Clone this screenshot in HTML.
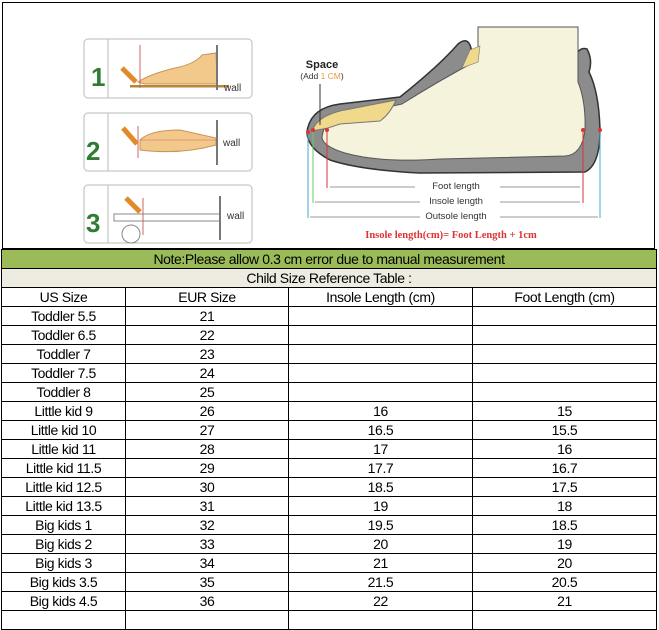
<!DOCTYPE html>
<html><head><meta charset="utf-8"><style>
body{margin:0;width:659px;height:614px;background:#fff;position:relative;overflow:hidden;font-family:"Liberation Sans",sans-serif;}
.img{position:absolute;left:2px;top:2px;width:653px;height:247px;border:1px solid #000;box-sizing:border-box}
svg{position:absolute;left:0;top:0}
table{position:absolute;left:1px;top:249px;border-collapse:collapse;table-layout:fixed;width:655px}
td{border:1px solid #000;height:18px;padding:0;text-align:center;font-size:14px;letter-spacing:-0.4px;line-height:18px;white-space:nowrap;overflow:hidden}
.g{background:#9bbb59}
.b{background:#eeece1}
</style></head><body>
<div class="img"></div>
<svg width="659" height="249" viewBox="0 0 659 249" xmlns="http://www.w3.org/2000/svg" font-family="Liberation Sans, sans-serif">
<g fill="none" stroke="#bbb" stroke-width="1">
<rect x="84" y="39" width="168" height="59" rx="4"/>
<rect x="84" y="113" width="168" height="58" rx="4"/>
<rect x="84" y="185" width="168" height="58" rx="4"/>
<line x1="108" y1="39" x2="108" y2="98"/><line x1="108" y1="113" x2="108" y2="171"/><line x1="108" y1="185" x2="108" y2="243"/>
</g>
<text x="91" y="86" font-size="26" font-weight="bold" fill="#2e7d32">1</text>
<text x="86" y="160" font-size="26" font-weight="bold" fill="#2e7d32">2</text>
<text x="86" y="232" font-size="26" font-weight="bold" fill="#2e7d32">3</text>
<path d="M138 82 Q150 74 175 68 Q195 64 202 55 L216 53 L217 84 L145 84 Z" fill="#f3c98b" stroke="#c9935a"/>
<rect x="130" y="85" width="99" height="2.5" fill="#b8863b"/>
<line x1="140" y1="45" x2="140" y2="88" stroke="#c66" stroke-width="1"/>
<path d="M140 140 Q150 130 180 130 L216 138 L216 145 Q180 155 140 150 Z" fill="#f3c98b" stroke="#c9935a"/>
<line x1="138" y1="126" x2="138" y2="158" stroke="#c66"/>
<line x1="140" y1="140" x2="216" y2="140" stroke="#c66" stroke-width="0.6"/>
<rect x="114" y="214" width="106" height="7" fill="#fff" stroke="#888"/>
<line x1="143" y1="198" x2="143" y2="235" stroke="#c66"/>
<line x1="217" y1="45" x2="217" y2="90" stroke="#777" stroke-width="2"/>
<line x1="217" y1="120" x2="217" y2="165" stroke="#777" stroke-width="2"/>
<line x1="220" y1="196" x2="220" y2="240" stroke="#777" stroke-width="2"/>
<text x="224" y="91" font-size="10" fill="#333">wall</text>
<text x="223" y="146" font-size="10" fill="#333">wall</text>
<text x="227" y="219" font-size="10" fill="#333">wall</text>
<path d="M122 68 L136 82" stroke="#e08a2a" stroke-width="5"/>
<path d="M123 128 L137 144" stroke="#e08a2a" stroke-width="5"/>
<path d="M126 198 L140 212" stroke="#e08a2a" stroke-width="5"/>
<circle cx="131" cy="234" r="9" fill="#fff" stroke="#888"/>
<path d="M307 132 Q310 108 340 104 L400 97 Q440 65 458 44 Q468 36 471 48 L472 60 L575 60 Q578 46 587 49 Q593 60 589 72 Q599 92 600 130 Q600 165 585 172 L420 173 Q360 170 330 160 Q307 148 307 132 Z" fill="#8c8c8c" stroke="#333" stroke-width="1.5"/>
<path d="M322 137 Q325 117 345 113 Q380 109 402 104 Q440 80 478 60 L478 27 L578 27 L578 82 Q586 102 585 130 Q582 155 565 156 L440 159 Q380 163 345 153 Q322 146 322 137 Z" fill="#f6f3dc" stroke="#555"/>
<path d="M312 131 Q318 114 350 109 L396 100 Q390 114 380 121 L340 124 L328 128 Z" fill="#f0d98a" stroke="#777"/>
<path d="M470 50 L480 46 L478 62 L462 68 Z" fill="#f0d98a" stroke="#777" stroke-width="0.6"/>
<line x1="308" y1="132" x2="308" y2="218" stroke="#4aa8c8"/>
<line x1="313" y1="130" x2="313" y2="203" stroke="#6c6"/>
<line x1="327" y1="130" x2="327" y2="188" stroke="#d33"/>
<line x1="583" y1="130" x2="583" y2="203" stroke="#d33"/>
<line x1="600" y1="130" x2="600" y2="218" stroke="#4aa8c8"/>
<g fill="#d33"><circle cx="308" cy="132" r="2"/><circle cx="313" cy="130" r="2"/><circle cx="327" cy="130" r="2"/><circle cx="583" cy="130" r="2"/><circle cx="600" cy="130" r="2"/></g>
<g stroke="#999" stroke-width="1"><line x1="330" y1="187" x2="415" y2="187"/><line x1="500" y1="187" x2="580" y2="187"/><line x1="315" y1="202" x2="420" y2="202"/><line x1="500" y1="202" x2="580" y2="202"/><line x1="310" y1="217" x2="420" y2="217"/><line x1="500" y1="217" x2="598" y2="217"/></g>
<text x="456" y="189" font-size="9.5" text-anchor="middle" fill="#333">Foot length</text>
<text x="456" y="204" font-size="9.5" text-anchor="middle" fill="#333">Insole length</text>
<text x="456" y="219" font-size="9.5" text-anchor="middle" fill="#333">Outsole length</text>
<text x="322" y="68" font-size="11" font-weight="bold" text-anchor="middle" fill="#222">Space</text>
<text x="322" y="79" font-size="8.5" text-anchor="middle" fill="#333">(Add <tspan fill="#e89a3c">1 CM</tspan>)</text>
<line x1="320" y1="84" x2="320" y2="125" stroke="#333"/>
<text x="451" y="238" font-size="10.5" font-weight="bold" font-family="Liberation Serif, serif" text-anchor="middle" fill="#d33">Insole length(cm)= Foot Length + 1cm</text>
</svg>
<table>
<colgroup><col style="width:124px"><col style="width:163px"><col style="width:184px"><col style="width:184px"></colgroup>
<tr><td colspan="4" class="g">Note:Please allow 0.3 cm error due to manual measurement</td></tr>
<tr><td colspan="4" class="b">Child Size Reference Table :</td></tr>
<tr><td>US Size</td><td>EUR Size</td><td>Insole Length (cm)</td><td>Foot Length (cm)</td></tr>
<tr><td>Toddler 5.5</td><td>21</td><td></td><td></td></tr>
<tr><td>Toddler 6.5</td><td>22</td><td></td><td></td></tr>
<tr><td>Toddler 7</td><td>23</td><td></td><td></td></tr>
<tr><td>Toddler 7.5</td><td>24</td><td></td><td></td></tr>
<tr><td>Toddler 8</td><td>25</td><td></td><td></td></tr>
<tr><td>Little kid 9</td><td>26</td><td>16</td><td>15</td></tr>
<tr><td>Little kid 10</td><td>27</td><td>16.5</td><td>15.5</td></tr>
<tr><td>Little kid 11</td><td>28</td><td>17</td><td>16</td></tr>
<tr><td>Little kid 11.5</td><td>29</td><td>17.7</td><td>16.7</td></tr>
<tr><td>Little kid 12.5</td><td>30</td><td>18.5</td><td>17.5</td></tr>
<tr><td>Little kid 13.5</td><td>31</td><td>19</td><td>18</td></tr>
<tr><td>Big kids 1</td><td>32</td><td>19.5</td><td>18.5</td></tr>
<tr><td>Big kids 2</td><td>33</td><td>20</td><td>19</td></tr>
<tr><td>Big kids 3</td><td>34</td><td>21</td><td>20</td></tr>
<tr><td>Big kids 3.5</td><td>35</td><td>21.5</td><td>20.5</td></tr>
<tr><td>Big kids 4.5</td><td>36</td><td>22</td><td>21</td></tr>
<tr><td></td><td></td><td></td><td></td></tr>
</table>
</body></html>
